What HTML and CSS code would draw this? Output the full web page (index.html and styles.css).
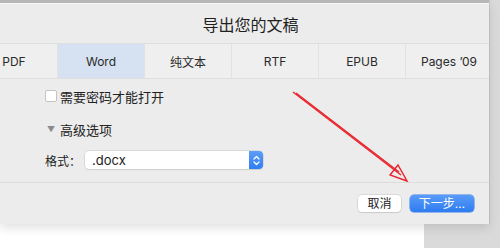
FILE: index.html
```html
<!DOCTYPE html>
<html>

<head>
    <title>导出您的文稿</title>
    <meta name="viewport" content="width=device-width, initial-scale=1.0">
    <link rel="stylesheet" href="styles.css">
</head>

<body>
    <div class="screen">
        <!-- Export sheet -->
        <div class="dialog">
            <div class="title-bar">导出您的文稿</div>

            <div class="tabs">
                <div class="tab">PDF</div>
                <div class="tab selected">Word</div>
                <div class="tab">纯文本</div>
                <div class="tab">RTF</div>
                <div class="tab">EPUB</div>
                <div class="tab">Pages ’09</div>
            </div>

            <div class="options">
                <label class="check-row">
                    <span class="checkbox"></span>
                    需要密码才能打开
                </label>

                <div class="advanced">
                    <span class="triangle">▼</span>
                    高级选项
                </div>

                <div class="format-row">
                    <span class="format-label">格式：</span>
                    <div class="select">
                        <span class="select-value">.docx</span>
                        <span class="stepper">
                            <svg width="7" height="11" viewBox="0 0 7 11" fill="none" stroke="white"
                                stroke-width="1.3" stroke-linecap="round" stroke-linejoin="round">
                                <path d="M1 4l2.5-2.5L6 4"></path>
                                <path d="M1 7l2.5 2.5L6 7"></path>
                            </svg>
                        </span>
                    </div>
                </div>
            </div>

            <div class="footer">
                <button class="btn">取消</button>
                <button class="btn primary">下一步…</button>
            </div>
        </div>

        <div class="doc-page"></div>

        <!-- Red annotation arrow -->
        <svg class="arrow" width="500" height="248" viewBox="0 0 500 248" fill="none" stroke="#e8232b"
            stroke-width="1.4" stroke-linejoin="miter">
            <path d="M293 92L401 175"></path>
            <path d="M296 93L399 172"></path>
            <path d="M407 181L390 175L398 165Z"></path>
        </svg>
    </div>
</body>

</html>
```

FILE: styles.css
```css
body {
    margin: 0;
    padding: 0;
    font-family: 'Inter', 'Noto Sans CJK SC', sans-serif;
    background-color: #d9d9d9;
}

.screen {
    position: relative;
    width: 500px;
    height: 248px;
    overflow: hidden;
    background-color: #dadada;
}

.dialog {
    position: relative;
    z-index: 1;
    width: 489px;
    height: 224px;
    background-color: #ececec;
    border-top: 3px solid #b7b7b7;
    box-sizing: border-box;
    box-shadow: 0 4px 10px rgba(0, 0, 0, 0.12), 1px 0 0 #c9c9c9;
    display: flex;
    flex-direction: column;
}

.title-bar {
    height: 40px;
    border-top: 1px solid #f6f6f6;
    box-sizing: border-box;
    display: flex;
    align-items: center;
    justify-content: center;
    font-size: 16px;
    color: #1f1f1f;
    padding-left: 12px;
}

.tabs {
    display: flex;
    height: 36px;
    margin-left: -29px;
    border-top: 1px solid #e0e0e0;
    border-bottom: 1px solid #e0e0e0;
    background-color: #efefef;
    box-sizing: border-box;
}

.tab {
    width: 86px;
    flex-shrink: 0;
    display: flex;
    align-items: center;
    justify-content: center;
    font-size: 12px;
    color: #2a2a2a;
    border-right: 1px solid #e2e2e2;
}

.tab:last-child {
    border-right: none;
}

.tab.selected {
    background-color: #d6e2f1;
}

.options {
    flex: 1;
    padding: 10px 0 0 45px;
    display: flex;
    flex-direction: column;
    border-bottom: 1px solid #dcdcdc;
}

.check-row {
    display: flex;
    align-items: center;
    height: 14px;
    font-size: 13px;
    color: #222;
}

.checkbox {
    width: 10px;
    height: 10px;
    background-color: white;
    border: 1px solid #c4c4c4;
    border-radius: 2px;
    margin-right: 3px;
}

.advanced {
    display: flex;
    align-items: center;
    height: 14px;
    margin-top: 19px;
    font-size: 13px;
    color: #222;
}

.triangle {
    font-size: 8px;
    color: #8a8a8a;
    margin: 0 5px 0 2px;
}

.format-row {
    display: flex;
    align-items: center;
    height: 18px;
    margin-top: 15px;
}

.format-label {
    width: 40px;
    font-size: 12px;
    color: #222;
}

.select {
    width: 178px;
    height: 18px;
    display: flex;
    align-items: center;
    background-color: white;
    border-radius: 4px;
    box-shadow: 0 0 0 0.5px #c8c8c8, 0 1px 1px rgba(0, 0, 0, 0.1);
}

.select-value {
    flex: 1;
    padding-left: 7px;
    font-size: 13px;
    color: #222;
}

.stepper {
    width: 14px;
    height: 18px;
    display: flex;
    align-items: center;
    justify-content: center;
    background: linear-gradient(#5c9df8, #2f7ef2);
    border-radius: 0 4px 4px 0;
}

.footer {
    height: 41px;
    display: flex;
    justify-content: flex-end;
    align-items: flex-start;
    gap: 9px;
    padding: 12px 15px 0 0;
    box-sizing: border-box;
}

.btn {
    height: 17px;
    width: 43px;
    padding: 0;
    white-space: nowrap;
    font-family: 'Inter', 'Noto Sans CJK SC', sans-serif;
    font-size: 12px;
    line-height: 17px;
    color: #222;
    background-color: white;
    border: none;
    border-radius: 4px;
    box-shadow: 0 0 0 0.5px #c6c6c6, 0 1px 1px rgba(0, 0, 0, 0.12);
}

.btn.primary {
    width: 64px;
    color: white;
    background: linear-gradient(#5a9bf8, #2e7cf1);
    box-shadow: 0 0 0 0.5px #3a7fe6;
}

.doc-page {
    width: 424px;
    height: 24px;
    background-color: white;
}

.arrow {
    position: absolute;
    left: 0;
    top: 0;
    z-index: 2;
}
```
